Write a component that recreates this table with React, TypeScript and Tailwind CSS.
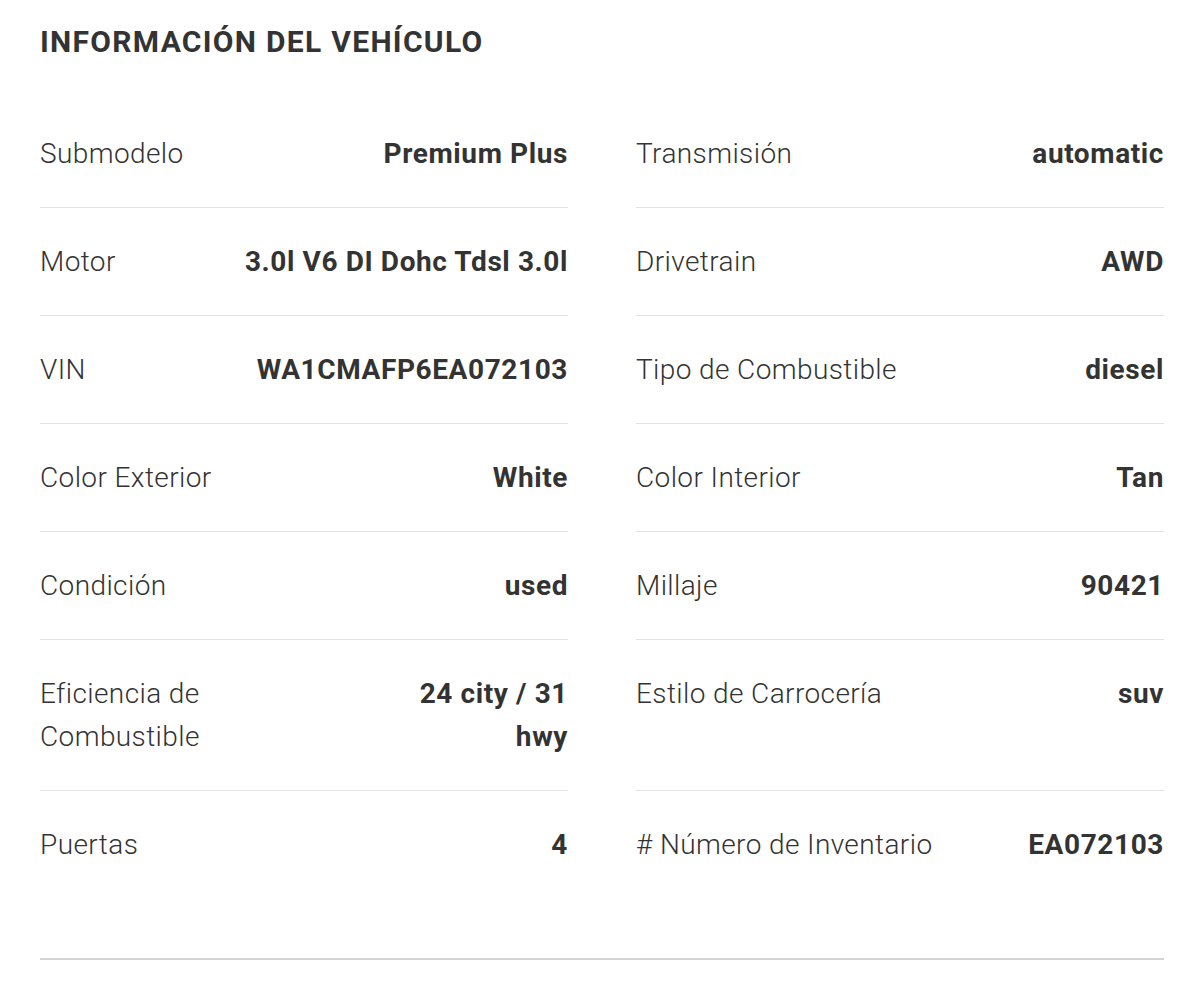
import React from 'react';

type Spec = { label: string; value: string; wrap?: boolean };

const rows: [Spec, Spec][] = [
  [{ label: 'Submodelo', value: 'Premium Plus' }, { label: 'Transmisión', value: 'automatic' }],
  [{ label: 'Motor', value: '3.0l V6 DI Dohc Tdsl 3.0l' }, { label: 'Drivetrain', value: 'AWD' }],
  [{ label: 'VIN', value: 'WA1CMAFP6EA072103' }, { label: 'Tipo de Combustible', value: 'diesel' }],
  [{ label: 'Color Exterior', value: 'White' }, { label: 'Color Interior', value: 'Tan' }],
  [{ label: 'Condición', value: 'used' }, { label: 'Millaje', value: '90421' }],
  [
    { label: 'Eficiencia de Combustible', value: '24 city / 31 hwy', wrap: true },
    { label: 'Estilo de Carrocería', value: 'suv' },
  ],
  [{ label: 'Puertas', value: '4' }, { label: '# Número de Inventario', value: 'EA072103' }],
];

function SpecRow({ spec, last }: { spec: Spec; last: boolean }) {
  return (
    <div
      className={`flex justify-between gap-4 py-8 text-[28px] leading-[43px] ${
        last ? '' : 'border-b border-[#e3e3e3]'
      }`}
    >
      <span className={`font-light tracking-[0.4px] text-[#333] ${spec.wrap ? 'w-[200px]' : ''}`}>
        {spec.label}
      </span>
      <span className={`font-bold tracking-[0.6px] text-right text-[#333] ${spec.wrap ? 'w-[170px]' : ''}`}>
        {spec.value}
      </span>
    </div>
  );
}

export default function App() {
  return (
    <div className="min-h-[994px] bg-white pl-10 pr-9 pt-[18px] font-['Roboto',sans-serif] text-[#333]">
      <h2 className="text-[30px] leading-[48px] font-bold uppercase tracking-[1.3px]">
        Información del Vehículo
      </h2>
      <div className="mt-[34px] grid grid-cols-2 gap-x-[68px]">
        {rows.map((pair, i) => (
          <React.Fragment key={i}>
            <SpecRow spec={pair[0]} last={i === rows.length - 1} />
            <SpecRow spec={pair[1]} last={i === rows.length - 1} />
          </React.Fragment>
        ))}
      </div>
      <div className="mt-[60px] border-b-2 border-[#d4d4d4]" />
    </div>
  );
}
